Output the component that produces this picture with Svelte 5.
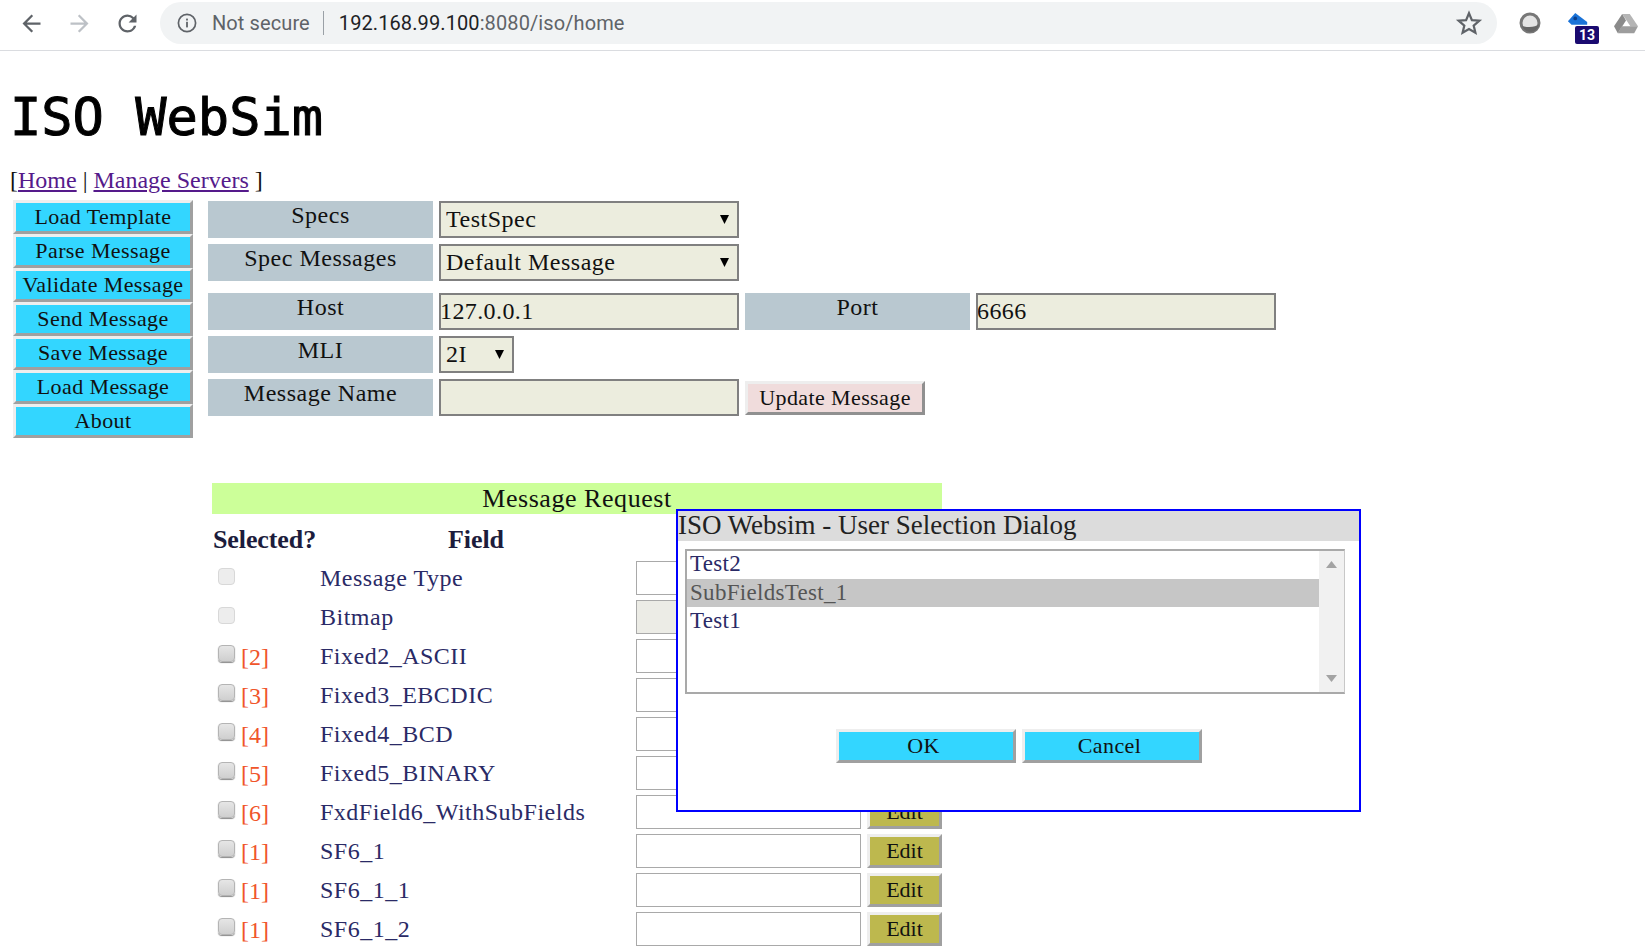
<script>
  const sideButtons = ['Load Template', 'Parse Message', 'Validate Message', 'Send Message', 'Save Message', 'Load Message', 'About'];
  const rows = [
    { tag: '', name: 'Message Type', off: true },
    { tag: '', name: 'Bitmap', off: true, grey: true },
    { tag: '[2]', name: 'Fixed2_ASCII' },
    { tag: '[3]', name: 'Fixed3_EBCDIC' },
    { tag: '[4]', name: 'Fixed4_BCD' },
    { tag: '[5]', name: 'Fixed5_BINARY' },
    { tag: '[6]', name: 'FxdField6_WithSubFields' },
    { tag: '[1]', name: 'SF6_1' },
    { tag: '[1]', name: 'SF6_1_1' },
    { tag: '[1]', name: 'SF6_1_2' }
  ];
  const items = ['Test2', 'SubFieldsTest_1', 'Test1'];
</script>

<div class="page">
  <header class="chrome">
    <svg class="nav-icon back" viewBox="0 0 24 24"><path d="M20 11H7.83l5.59-5.59L12 4l-8 8 8 8 1.41-1.41L7.83 13H20v-2z"/></svg>
    <svg class="nav-icon fwd" viewBox="0 0 24 24"><path d="M4 11h12.17l-5.59-5.59L12 4l8 8-8 8-1.41-1.41L16.17 13H4v-2z"/></svg>
    <svg class="nav-icon reload" viewBox="0 0 24 24"><path d="M17.65 6.35A7.958 7.958 0 0 0 12 4c-4.42 0-7.99 3.58-7.99 8s3.57 8 7.99 8c3.73 0 6.84-2.55 7.73-6h-2.08A5.99 5.99 0 0 1 12 18c-3.31 0-6-2.69-6-6s2.69-6 6-6c1.66 0 3.14.69 4.22 1.78L13 11h7V4l-2.35 2.35z"/></svg>
    <div class="omnibox">
      <svg class="info" viewBox="0 0 20 20"><circle cx="10" cy="10" r="8.6" fill="none" stroke="#5f6368" stroke-width="1.7"/><rect x="9.1" y="8.8" width="1.8" height="5.6" fill="#5f6368"/><rect x="9.1" y="5.6" width="1.8" height="1.9" fill="#5f6368"/></svg>
      <span class="secure">Not secure</span>
      <span class="sep"></span>
      <span class="url"><b>192.168.99.100</b>:8080/iso/home</span>
      <svg class="star" viewBox="0 0 24 24"><path d="M12 3.6l2.5 5.9 6.4.5-4.9 4.2 1.5 6.2L12 17.1l-5.5 3.3L8 14.2 3.1 10l6.4-.5z" fill="none" stroke="#5f6368" stroke-width="1.9" stroke-linejoin="miter"/></svg>
    </div>
    <div class="extensions">
      <svg class="ext-ring" viewBox="0 0 24 24"><circle cx="12" cy="12" r="9" fill="#e4e4e4" stroke="#777" stroke-width="3"/><path d="M4 15a9 9 0 0 0 15 3c1-1 1.800-3 2-5-3 3-10 4-17 2z" fill="#666"/></svg>
      <span class="ext-tag">
        <svg viewBox="0 0 24 24"><path d="M1 10L9 1l13 10v3H5z" fill="#1a73d8"/><circle cx="9" cy="7" r="2" fill="#0d3f8a"/></svg>
        <span class="badge">13</span>
      </span>
      <svg class="ext-drive" viewBox="0 0 24 24" preserveAspectRatio="none"><path d="M8.200 1h7.600L24 15h-7.600z" fill="#b5b5b5"/><path d="M8.200 1L0 15l3.800 8L12 8.500z" fill="#8a8a8a"/><path d="M3.800 23h16.400l3.800-8H7.600z" fill="#9d9d9d"/></svg>
    </div>
  </header>

  <h1>ISO WebSim</h1>

  <nav>[<a href="#home">Home</a> | <a href="#servers">Manage Servers</a> ]</nav>

  <section class="top">
    <div class="side">
      {#each sideButtons as label}
        <button class="blue">{label}</button>
      {/each}
    </div>

    <div class="form">
      <div class="group">
        <div class="frow">
          <div class="label">Specs</div>
          <div class="pick wide"><select><option>TestSpec</option></select></div>
        </div>
        <div class="frow">
          <div class="label">Spec Messages</div>
          <div class="pick wide"><select><option>Default Message</option></select></div>
        </div>
      </div>
      <div class="group">
        <div class="frow">
          <div class="label">Host</div>
          <input class="box" value="127.0.0.1" />
          <div class="label">Port</div>
          <input class="box" value="6666" />
        </div>
        <div class="frow">
          <div class="label">MLI</div>
          <div class="pick mli"><select><option>2I</option></select></div>
        </div>
        <div class="frow">
          <div class="label">Message Name</div>
          <input class="box" />
          <button class="update">Update Message</button>
        </div>
      </div>
    </div>
  </section>

  <section class="request">
    <div class="banner">Message Request</div>
    <div class="heads"><span>Selected?</span><span class="field-head">Field</span></div>
    {#each rows as r}
      <div class="row">
        <input type="checkbox" class="check" class:off={r.off} disabled={r.off} />
        <span class="tag">{r.tag}</span>
        <span class="name">{r.name}</span>
        <input class="value" class:grey={r.grey} />
        <button class="edit">Edit</button>
      </div>
    {/each}
  </section>

  <div class="dialog">
    <div class="dialog-title">ISO Websim - User Selection Dialog</div>
    <div class="list">
      <div class="options">
        {#each items as it, i}
          <div class="option" class:selected={i === 1}>{it}</div>
        {/each}
      </div>
      <div class="scroll">
        <span class="up"></span>
        <span class="down"></span>
      </div>
    </div>
    <div class="actions">
      <button class="blue">OK</button>
      <button class="blue">Cancel</button>
    </div>
  </div>
</div>

<style>
  :global(body) { margin: 0; background: #fff; }
  * { box-sizing: border-box; }
  .page {
    position: relative;
    width: 1645px;
    height: 949px;
    overflow: hidden;
    font-family: "Liberation Serif", serif;
    color: #111;
  }
  .chrome {
    display: flex;
    align-items: flex-start;
    height: 51px;
    border-bottom: 1px solid #dadce0;
    padding-top: 2px;
    font-family: Roboto, sans-serif;
  }
  .nav-icon { width: 27px; height: 27px; margin-top: 8px; flex: none; }
  .back { margin-left: 18px; fill: #5f6368; }
  .fwd { margin-left: 21px; fill: #bdc1c6; }
  .reload { margin-left: 21px; fill: #5f6368; }
  .omnibox {
    display: flex;
    align-items: center;
    width: 1337px;
    height: 42px;
    margin-left: 19px;
    background: #f1f3f4;
    border-radius: 21px;
    padding-left: 17px;
    font-size: 20px;
    letter-spacing: 0.1px;
    color: #5f6368;
  }
  .info { width: 20px; height: 20px; flex: none; }
  .secure { margin-left: 15px; }
  .sep { width: 1px; height: 24px; background: #9aa0a6; margin: 0 15px 0 13px; }
  .url b { font-weight: 400; color: #202124; }
  .star { width: 28px; height: 28px; margin-left: auto; margin-right: 14px; }
  .extensions { display: flex; align-items: flex-start; }
  .ext-ring { width: 24px; height: 24px; margin: 9px 0 0 21px; }
  .ext-tag { position: relative; display: block; width: 30px; height: 42px; margin-left: 25px; }
  .ext-tag svg { position: absolute; left: 0; top: 10px; width: 22px; height: 22px; }
  .badge {
    position: absolute;
    left: 8px;
    top: 24px;
    width: 24px;
    height: 18px;
    background: #1a0a70;
    color: #fff;
    border-radius: 2px;
    font: 700 14px/18px Roboto, sans-serif;
    text-align: center;
  }
  .ext-drive { width: 24px; height: 21px; margin: 11px 0 0 17px; }

  h1 {
    margin: 37px 0 0 10px;
    height: 59px;
    font: 400 52px/59px "DejaVu Sans Mono", monospace;
    -webkit-text-stroke: 1px #000;
    color: #000;
  }
  nav {
    margin: 15px 0 0 10px;
    height: 38px;
    font-size: 24px;
    line-height: 36px;
    color: #111;
  }
  nav a { color: #551a8b; }

  .top { display: flex; align-items: flex-start; }
  .side { display: flex; flex-direction: column; width: 180px; margin-left: 13px; flex: none; }
  button {
    font-family: "Liberation Serif", serif;
    cursor: default;
    padding: 0;
  }
  .blue {
    height: 34px;
    width: 180px;
    background: #33d6ff;
    border: 3px solid;
    border-color: #eeeeee #a0a0a0 #a0a0a0 #eeeeee;
    font-size: 22px;
    letter-spacing: 0.4px;
    color: #111;
  }
  .form {
    display: flex;
    flex-direction: column;
    gap: 12px;
    margin-left: 15px;
    margin-top: 1px;
  }
  .group { display: flex; flex-direction: column; gap: 6px; }
  .frow { display: flex; gap: 6px; height: 37px; align-items: flex-start; }
  .label {
    flex: none;
    width: 225px;
    height: 37px;
    background: #b9c8d0;
    text-align: center;
    font-size: 24px;
    line-height: 28px;
    letter-spacing: 0.5px;
  }
  .pick { position: relative; flex: none; }
  .pick.wide { width: 300px; }
  .pick.mli { width: 75px; }
  .pick select {
    appearance: none;
    display: block;
    width: 100%;
    height: 37px;
    background: #ecedde;
    border: 2px solid #808080;
    border-radius: 0;
    font-family: "Liberation Serif", serif;
    font-size: 24px;
    letter-spacing: 0.5px;
    color: #111;
    padding: 0 0 2px 5px;
  }
  .pick::after {
    content: "";
    position: absolute;
    right: 10px;
    top: 14px;
    width: 9px;
    height: 9px;
    background: #000;
    clip-path: polygon(0 0, 100% 0, 50% 100%);
  }
  .box {
    flex: none;
    width: 300px;
    height: 37px;
    background: #ecedde;
    border: 2px solid #808080;
    font-family: "Liberation Serif", serif;
    font-size: 24px;
    letter-spacing: 0.4px;
    color: #111;
    padding: 0 0 1px 0;
    text-indent: -1px;
  }
  .update {
    flex: none;
    margin-top: 2px;
    width: 180px;
    height: 34px;
    background: #f0dcdc;
    border: 3px solid;
    border-color: #eeeeee #909090 #909090 #eeeeee;
    font-size: 22px;
    letter-spacing: 0.4px;
    color: #111;
  }

  .request { margin: 45px 0 0 212px; width: 730px; }
  .banner {
    height: 31px;
    background: #ccff99;
    text-align: center;
    font-size: 26px;
    line-height: 31px;
    letter-spacing: 0.55px;
  }
  .heads {
    display: flex;
    height: 47px;
    padding-left: 1px;
    font-size: 26px;
    line-height: 52px;
    font-weight: 700;
    letter-spacing: -0.1px;
    color: #1c1c3c;
  }
  .field-head { margin-left: 132px; }
  .row {
    display: grid;
    grid-template-columns: 25px 77px 316px 231px 75px;
    height: 39px;
    margin-left: 6px;
    width: 730px;
    align-items: start;
  }
  .check {
    appearance: none;
    margin: 6px 0 0 0;
    width: 17px;
    height: 17px;
    border-radius: 4px;
    border: 1px solid #b4b4b4;
    background: linear-gradient(#e6e6e6, #cfcfcf);
    box-shadow: 0 1px 1px #8a8a8a;
  }
  .check.off {
    margin-top: 7px;
    background: #ededed;
    border-color: #d8d8d8;
    box-shadow: none;
  }
  .tag {
    color: #f0552a;
    font-size: 24px;
    line-height: 36px;
    margin-left: -2px;
  }
  .name {
    color: #2a2a66;
    font-size: 24px;
    line-height: 34px;
    letter-spacing: 0.5px;
    white-space: nowrap;
  }
  .value {
    width: 225px;
    height: 34px;
    border: 1px solid #a9a9a9;
    background: #fff;
    margin: 0;
    padding: 0;
  }
  .value.grey { background: #ecece6; }
  .edit {
    width: 75px;
    height: 34px;
    background: #bdb84e;
    border: 3px solid;
    border-color: #eeeeee #a0a0a0 #a0a0a0 #eeeeee;
    font-size: 22px;
    color: #111;
  }

  .dialog {
    position: absolute;
    left: 676px;
    top: 509px;
    width: 685px;
    height: 303px;
    background: #fff;
    border: 2px solid #0000ff;
  }
  .dialog-title {
    height: 30px;
    background: #dcdcdc;
    font-size: 27px;
    line-height: 28px;
    white-space: nowrap;
    color: #222;
  }
  .list {
    display: flex;
    height: 145px;
    margin: 8px 14px 0 7px;
    border: 2px solid #a9a9a9;
    border-right: 1px solid #c8c8c8;
  }
  .options { flex: 1; }
  .option {
    height: 28px;
    padding-left: 3px;
    font-size: 23px;
    line-height: 27px;
    letter-spacing: 0.3px;
    color: #2a2a66;
  }
  .option:first-child { line-height: 26px; }
  .option.selected { background: #c6c6c6; color: #555; }
  .scroll {
    position: relative;
    width: 25px;
    background: #f1f1f1;
  }
  .up, .down {
    position: absolute;
    left: 7px;
    width: 11px;
    height: 7px;
    background: #a3a3a3;
  }
  .up { top: 10px; clip-path: polygon(50% 0, 100% 100%, 0 100%); }
  .down { bottom: 10px; clip-path: polygon(0 0, 100% 0, 50% 100%); }
  .actions {
    display: flex;
    gap: 6px;
    margin: 35px 0 0 158px;
  }
  .actions .blue { padding-right: 5px; }
</style>
